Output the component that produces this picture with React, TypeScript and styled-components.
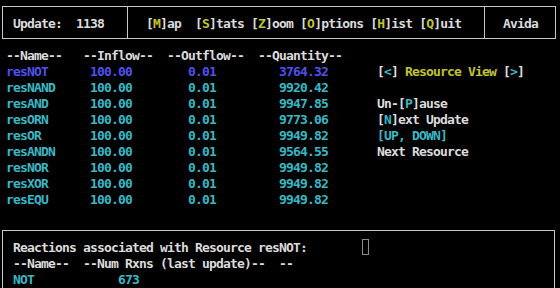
import React from "react";
import styled, { createGlobalStyle } from "styled-components";

const CW = 7;

const GlobalStyle = createGlobalStyle`
  html, body { margin: 0; padding: 0; background: #000; }
`;

const C = {
  white: "#dcdcdc",
  line: "#c8c8c8",
  yellow: "#c4c432",
  cyan: "#38b8c6",
  blue: "#5050ee",
  cursor: "#8c8c8c",
};

const Screen = styled.div`
  width: 560px;
  height: 288px;
  overflow: hidden;
  background: #000;
  color: ${C.white};
  font-family: "DejaVu Sans Mono", "Liberation Mono", monospace;
  font-weight: bold;
  font-size: 13px;
  letter-spacing: -0.826px;
  line-height: 16px;
  white-space: pre;
`;

const HeaderBox = styled.div`
  box-sizing: border-box;
  height: 33px;
  margin: 6px 4px 0 2px;
  border: 1px solid ${C.line};
  display: grid;
  grid-template-columns: 124px 357px 1fr;
`;

const HeaderCell = styled.div<{ $divider?: boolean }>`
  padding: 9px 0 0 ${(p) => (p.$divider ? 18 : 10)}px;
  border-left: ${(p) => (p.$divider ? `1px solid ${C.line}` : "none")};
`;

const Key = styled.span<{ $tone?: "yellow" | "cyan" }>`
  color: ${(p) => (p.$tone === "cyan" ? C.cyan : C.yellow)};
`;

const Main = styled.div`
  display: flex;
  margin-top: 9px;
  padding-left: 6px;
`;

const Table = styled.div`
  width: 371px;
  display: grid;
  grid-template-columns: 77px 84px 91px 1fr;
  grid-auto-rows: 16px;
`;

const Cell = styled.div<{ $indent?: number; $tone?: "blue" | "cyan" | "white" }>`
  padding-left: ${(p) => (p.$indent ?? 0) * CW}px;
  color: ${(p) =>
    p.$tone === "blue" ? C.blue : p.$tone === "cyan" ? C.cyan : C.white};
`;

const Panel = styled.div`
  display: flex;
  flex-direction: column;
  padding-top: 16px;
`;

const PanelLine = styled.div<{ $tone?: "cyan" | "white" }>`
  height: 16px;
  color: ${(p) => (p.$tone === "cyan" ? C.cyan : C.white)};
`;

const BottomBox = styled.div`
  box-sizing: border-box;
  height: 80px;
  margin: 22px 5px 0 2px;
  border: 1px solid ${C.line};
  padding: 9px 0 0 10px;
`;

const Line = styled.div<{ $tone?: "cyan" | "white" }>`
  height: 16px;
  color: ${(p) => (p.$tone === "cyan" ? C.cyan : C.white)};
`;

const Cursor = styled.span`
  display: inline-block;
  box-sizing: border-box;
  width: 7px;
  height: 16px;
  margin-left: ${8 * CW - 1}px;
  vertical-align: top;
  margin-top: -1px;
  border: 1px solid ${C.cursor};
`;

const Pad = styled.span<{ $n: number }>`
  display: inline-block;
  width: ${(p) => p.$n * CW}px;
`;

const rows: [string, string][] = [
  ["resNOT", "3764.32"],
  ["resNAND", "9920.42"],
  ["resAND", "9947.85"],
  ["resORN", "9773.06"],
  ["resOR", "9949.82"],
  ["resANDN", "9564.55"],
  ["resNOR", "9949.82"],
  ["resXOR", "9949.82"],
  ["resEQU", "9949.82"],
];

export default function App() {
  return (
    <>
      <GlobalStyle />
      <Screen>
        <HeaderBox>
          <HeaderCell>Update:  1138</HeaderCell>
          <HeaderCell $divider>
            [<Key>M</Key>]ap  [<Key>S</Key>]tats [<Key>Z</Key>]oom [<Key>O</Key>]ptions [<Key>H</Key>]ist [<Key>Q</Key>]uit
          </HeaderCell>
          <HeaderCell $divider>Avida</HeaderCell>
        </HeaderBox>
        <Main>
          <Table>
            <Cell>--Name--</Cell>
            <Cell>--Inflow--</Cell>
            <Cell>--Outflow--</Cell>
            <Cell>--Quantity--</Cell>
            {rows.map(([name, qty], i) => {
              const tone = i === 0 ? "blue" : "cyan";
              return (
                <React.Fragment key={name}>
                  <Cell $tone={tone}>{name}</Cell>
                  <Cell $tone={tone} $indent={1}>100.00</Cell>
                  <Cell $tone={tone} $indent={3}>0.01</Cell>
                  <Cell $tone={tone} $indent={3}>{qty}</Cell>
                </React.Fragment>
              );
            })}
          </Table>
          <Panel>
            <PanelLine>
              [<Key $tone="cyan">&lt;</Key>] <Key>Resource View</Key> [<Key $tone="cyan">&gt;</Key>]
            </PanelLine>
            <PanelLine />
            <PanelLine>
              Un-[<Key $tone="cyan">P</Key>]ause
            </PanelLine>
            <PanelLine>
              [<Key $tone="cyan">N</Key>]ext Update
            </PanelLine>
            <PanelLine $tone="cyan">[UP, DOWN]</PanelLine>
            <PanelLine>Next Resource</PanelLine>
          </Panel>
        </Main>
        <BottomBox>
          <Line>
            Reactions associated with Resource resNOT:<Cursor />
          </Line>
          <Line>--Name--  --Num Rxns (last update)--  --</Line>
          <Line $tone="cyan">
            NOT<Pad $n={12} />673
          </Line>
        </BottomBox>
      </Screen>
    </>
  );
}
